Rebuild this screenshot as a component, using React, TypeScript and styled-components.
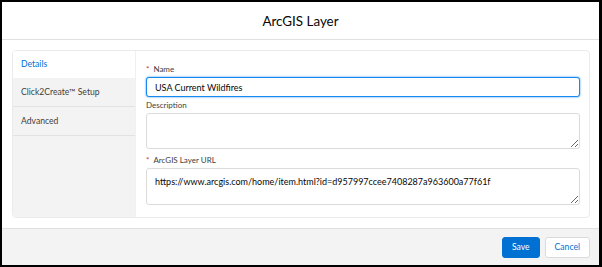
import React from 'react';
import styled, { createGlobalStyle } from 'styled-components';

const GlobalStyle = createGlobalStyle`
  html, body {
    margin: 0;
    padding: 0;
    background: #fff;
  }
  body {
    font-family: Lato, "Noto Sans", sans-serif;
    color: #16325c;
  }
  * {
    box-sizing: border-box;
  }
`;

const Frame = styled.div`
  width: 602px;
  height: 267px;
  border-style: solid;
  border-color: #000;
  border-width: 2px 3px 2px 2px;
  display: flex;
  flex-direction: column;
  background: #fff;
`;

const Header = styled.div`
  height: 38px;
  flex: none;
  display: flex;
  align-items: center;
  justify-content: center;
  border-bottom: 1px solid #e0e0e0;
  font-size: 13.4px;
  color: #080707;
  padding-top: 1px;
`;

const Body = styled.div`
  flex: 1;
  padding: 10px 9px 10px 10px;
  display: flex;
`;

const Card = styled.div`
  flex: 1;
  display: flex;
  border: 1px solid #ebebeb;
  border-radius: 4px;
  overflow: hidden;
`;

const Sidebar = styled.div`
  width: 123px;
  flex: none;
  background: #f3f3f3;
  border-right: 1px solid #f0f0f0;
`;

const Tab = styled.div<{ $active?: boolean }>`
  display: flex;
  align-items: center;
  padding-left: 8px;
  font-size: 8.6px;
  background: ${p => (p.$active ? '#fff' : '#f3f3f3')};
  color: ${p => (p.$active ? '#0070d2' : '#3e3e3c')};
  border-bottom: 1px solid ${p => (p.$active ? '#fff' : '#e2e2e2')};
  height: ${p => (p.$active ? '27px' : '29px')};
`;

const Form = styled.div`
  flex: 1;
  padding: 12px 9px 0 10px;
  display: flex;
  flex-direction: column;
`;

const Field = styled.div<{ $space?: number }>`
  display: flex;
  flex-direction: column;
  margin-bottom: ${p => p.$space ?? 2}px;
`;

const Label = styled.label`
  font-size: 8px;
  line-height: 13px;
  color: #3e3e3c;
  margin-bottom: 1px;
`;

const Req = styled.span`
  color: #c23934;
  margin-right: 4px;
`;

const TextInput = styled.input`
  height: 20px;
  width: 100%;
  border: 1px solid #1589ee;
  border-radius: 3px;
  box-shadow: 0 0 2px #1589ee;
  padding: 0 8px;
  font-family: inherit;
  font-size: 9px;
  color: #080707;
  outline: none;
  background: #fff;
`;

const Area = styled.textarea<{ $h: number }>`
  height: ${p => p.$h}px;
  width: 100%;
  border: 1px solid #dddbda;
  border-radius: 3px;
  padding: 6px 8px;
  font-family: inherit;
  font-size: 9px;
  line-height: 13px;
  color: #080707;
  resize: vertical;
  outline: none;
  background: #fff;
`;

const Footer = styled.div`
  height: 37px;
  flex: none;
  border-top: 1px solid #e0e0e0;
  background: #f3f3f3;
  display: flex;
  align-items: center;
  justify-content: flex-end;
  gap: 5px;
  padding-right: 9px;
`;

const Btn = styled.button<{ $brand?: boolean }>`
  height: 21px;
  padding: 0 9px;
  border-radius: 3px;
  font-family: inherit;
  font-size: 8.6px;
  border: 1px solid ${p => (p.$brand ? '#0070d2' : '#dddbda')};
  background: ${p => (p.$brand ? '#0070d2' : '#fff')};
  color: ${p => (p.$brand ? '#fff' : '#0070d2')};
  cursor: pointer;
`;

export default function App() {
  return (
    <>
      <GlobalStyle />
      <Frame>
        <Header>ArcGIS Layer</Header>
        <Body>
          <Card>
            <Sidebar>
              <Tab $active>Details</Tab>
              <Tab>Click2Create™ Setup</Tab>
              <Tab>Advanced</Tab>
            </Sidebar>
            <Form>
              <Field>
                <Label>
                  <Req>*</Req>Name
                </Label>
                <TextInput defaultValue="USA Current Wildfires" />
              </Field>
              <Field $space={5}>
                <Label>Description</Label>
                <Area $h={36} />
              </Field>
              <Field>
                <Label>
                  <Req>*</Req>ArcGIS Layer URL
                </Label>
                <Area
                  $h={37}
                  defaultValue="https://www.arcgis.com/home/item.html?id=d957997ccee7408287a963600a77f61f"
                />
              </Field>
            </Form>
          </Card>
        </Body>
        <Footer>
          <Btn $brand>Save</Btn>
          <Btn>Cancel</Btn>
        </Footer>
      </Frame>
    </>
  );
}
